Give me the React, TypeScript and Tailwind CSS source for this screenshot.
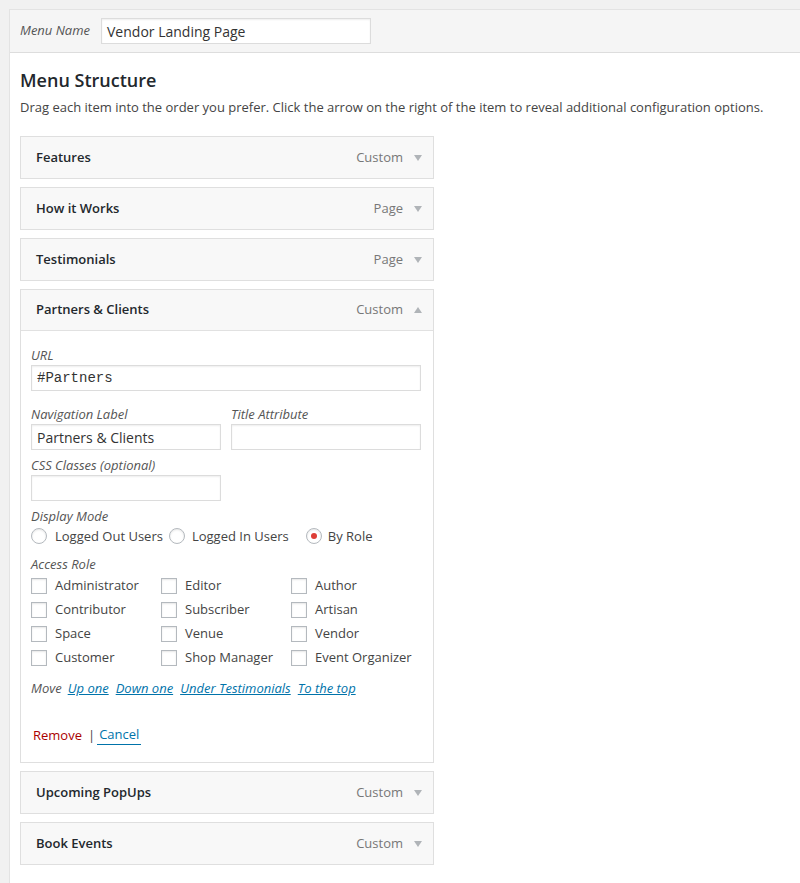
import React from 'react';

const font = { fontFamily: '"Open Sans", "Liberation Sans", sans-serif' };

const items = [
  { title: 'Features', type: 'Custom' },
  { title: 'How it Works', type: 'Page' },
  { title: 'Testimonials', type: 'Page' },
];

const after = [
  { title: 'Upcoming PopUps', type: 'Custom' },
  { title: 'Book Events', type: 'Custom' },
];

const roles = [
  'Administrator', 'Editor', 'Author',
  'Contributor', 'Subscriber', 'Artisan',
  'Space', 'Venue', 'Vendor',
  'Customer', 'Shop Manager', 'Event Organizer',
];

function Arrow({ up }: { up?: boolean }) {
  return (
    <svg width="8" height="6" viewBox="0 0 8 6" className="ml-[11px]">
      {up ? <polygon points="0,6 8,6 4,0" fill="#b0b4b8" /> : <polygon points="0,0 8,0 4,6" fill="#b0b4b8" />}
    </svg>
  );
}

function ItemBar({ title, type, up, open }: { title: string; type: string; up?: boolean; open?: boolean }) {
  return (
    <div className={`h-[41px] bg-[#f8f8f8] flex items-center pl-[15px] pr-[11px] ${open ? 'border-b border-[#e1e1e1]' : ''}`}>
      <div className="font-semibold text-[13px] text-[#23282d] flex-1">{title}</div>
      <div className="text-[13px] text-[#777]">{type}</div>
      <Arrow up={up} />
    </div>
  );
}

function Field({ className = '', children }: { className?: string; children?: React.ReactNode }) {
  return (
    <div className={`h-[26px] border border-[#dcdcdc] bg-white shadow-[inset_0_1px_2px_rgba(0,0,0,0.07)] flex items-center px-[5px] text-[14px] text-[#333] ${className}`}>
      {children}
    </div>
  );
}

function Radio({ checked }: { checked?: boolean }) {
  return (
    <span className="w-[16px] h-[16px] rounded-full border border-[#b4b9be] bg-white shadow-[inset_0_1px_2px_rgba(0,0,0,0.1)] flex items-center justify-center shrink-0">
      {checked && <span className="w-[6px] h-[6px] rounded-full bg-[#dd3d36]" />}
    </span>
  );
}

function Check() {
  return <span className="w-[16px] h-[16px] border border-[#b4b9be] bg-white shadow-[inset_0_1px_2px_rgba(0,0,0,0.1)] shrink-0" />;
}

const label = 'italic text-[13px] text-[#555] leading-[20px]';

export default function App() {
  return (
    <div className="min-h-screen bg-[#f1f1f1] pt-[9px] pl-[9px]" style={font}>
      <div className="bg-white border-l border-t border-[#e3e3e3] min-h-[874px]">
        <div className="h-[43px] bg-[#f5f5f5] border-b border-[#dddddd] flex items-center pl-[10px]">
          <span className="italic text-[13px] text-[#555] mr-[11px]">Menu Name</span>
          <Field className="w-[270px] text-[#333]">Vendor Landing Page</Field>
        </div>

        <div className="px-[10px]">
          <h3 className="mt-[15px] text-[18px] leading-[24px] font-semibold text-[#23282d]">Menu Structure</h3>
          <p className="mt-[5px] text-[13px] leading-[20px] text-[#444]">
            Drag each item into the order you prefer. Click the arrow on the right of the item to reveal additional configuration options.
          </p>

          <div className="mt-[19px] w-[414px] flex flex-col gap-[8px]">
            {items.map(it => (
              <div key={it.title} className="border border-[#dfdfdf]">
                <ItemBar title={it.title} type={it.type} />
              </div>
            ))}

            <div className="border border-[#dfdfdf]">
              <ItemBar title="Partners & Clients" type="Custom" up open />
              <div className="bg-white pl-[10px] pr-[12px] pt-[14px] pb-[17px]">
                <div className={label}>URL</div>
                <Field className="w-full font-['Liberation_Mono',monospace] text-[13px]">#Partners</Field>

                <div className="mt-[13px] grid grid-cols-2 gap-x-[10px]">
                  <div>
                    <div className={label}>Navigation Label</div>
                    <Field>Partners &amp; Clients</Field>
                  </div>
                  <div>
                    <div className={label}>Title Attribute</div>
                    <Field />
                  </div>
                  <div className="mt-[5px]">
                    <div className={label}>CSS Classes (optional)</div>
                    <Field />
                  </div>
                </div>

                <div className={`mt-[5px] ${label}`}>Display Mode</div>
                <div className="flex items-center text-[13px] text-[#444] leading-[20px]">
                  <Radio />
                  <span className="ml-[8px] mr-[6px]">Logged Out Users</span>
                  <Radio />
                  <span className="ml-[7px] mr-[17px]">Logged In Users</span>
                  <Radio checked />
                  <span className="ml-[6px]">By Role</span>
                </div>

                <div className={`mt-[8px] ${label}`}>Access Role</div>
                <div className="grid grid-cols-[130px_130px_130px] text-[13px] text-[#444]">
                  {roles.map(r => (
                    <div key={r} className="h-[24px] flex items-center">
                      <Check />
                      <span className="ml-[8px]">{r}</span>
                    </div>
                  ))}
                </div>

                <div className="mt-[8px] flex items-center gap-[7px] italic text-[13px] leading-[20px]">
                  <span className="text-[#555] -mr-[1px]">Move</span>
                  <a className="text-[#0073aa] underline">Up one</a>
                  <a className="text-[#0073aa] underline">Down one</a>
                  <a className="text-[#0073aa] underline">Under Testimonials</a>
                  <a className="text-[#0073aa] underline">To the top</a>
                </div>

                <div className="mt-[26px] flex items-center text-[13px] leading-[20px] pl-[2px]">
                  <a className="text-[#a00]">Remove</a>
                  <span className="ml-[6px] mr-[2px] text-[#444]">|</span>
                  <a className="text-[#0073aa] border-b border-[#0073aa] px-[2px]">Cancel</a>
                </div>
              </div>
            </div>

            {after.map(it => (
              <div key={it.title} className="border border-[#dfdfdf]">
                <ItemBar title={it.title} type={it.type} />
              </div>
            ))}
          </div>
        </div>
      </div>
    </div>
  );
}
